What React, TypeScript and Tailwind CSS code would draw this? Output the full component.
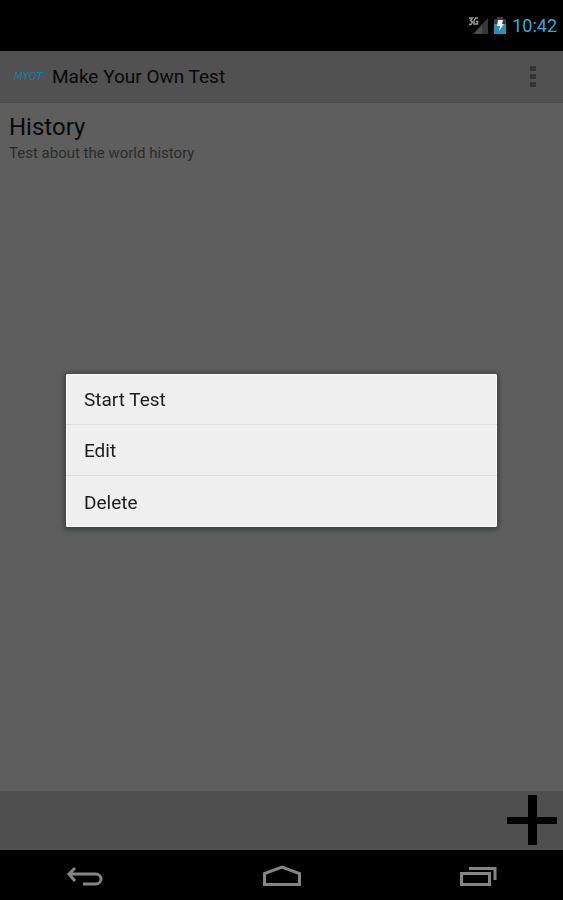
import type { ReactNode } from "react";

const menuItems = ["Start Test", "Edit", "Delete"];

const tests = [
  { id: 1, title: "History", description: "Test about the world history" },
];

function SignalIcon() {
  return (
    <svg width="20" height="18" viewBox="0 0 20 18" aria-hidden="true">
      <path d="M20 1v16H5z" fill="#373737" />
      <path d="M14 8v9H6z" fill="#4c4c4c" />
      <g fill="none" stroke="#9a9a9a" strokeWidth="1.5">
        <path d="M1 1h3.500L2.500 3.500 4.500 5 3 7.500H1" />
        <path d="M10 1H7.500L6 4v3h3.500V4.500H8" />
      </g>
    </svg>
  );
}

function BatteryIcon() {
  return (
    <svg width="12" height="18" viewBox="0 0 12 18" aria-hidden="true">
      <path d="M3 0h6v2h3v5H0V2h3z" fill="#3c3c3c" />
      <path d="M0 7h12v10H0z" fill="#2f8fb5" />
      <path d="M4 3h5L8 7h2l-5 7 1-5H3z" fill="#e6f1f5" />
    </svg>
  );
}

function NavButton({ label, children }: { label: string; children: ReactNode }) {
  return (
    <button type="button" aria-label={label}>
      <svg
        width="38"
        height="24"
        viewBox="0 0 38 24"
        fill="none"
        stroke="#858585"
        strokeWidth="3"
        aria-hidden="true"
      >
        {children}
      </svg>
    </button>
  );
}

function StatusBar() {
  return (
    <div className="flex h-[51px] items-center justify-end bg-black pr-1.5">
      <SignalIcon />
      <span className="ml-1.5">
        <BatteryIcon />
      </span>
      <time className="ml-1.5 text-lg text-[#33aade]">10:42</time>
    </div>
  );
}

function ActionBar() {
  return (
    <header className="flex h-[52px] items-center border-b border-[#4c4c4c] bg-[#515151] pr-6 pl-3.5">
      <span className="w-[38px] font-['DejaVu_Sans',sans-serif] text-[10px] text-[#0f81a8] italic">
        MYOT
      </span>
      <h1 className="flex-1 pt-0.5 text-[19px] text-[#080808]">
        Make Your Own Test
      </h1>
      <button type="button" aria-label="More options">
        <svg width="12" height="24" viewBox="0 0 12 24" fill="#343434" aria-hidden="true">
          <path d="M3 1h6v5H3zM3 9h6v5H3zM3 17h6v5H3z" />
        </svg>
      </button>
    </header>
  );
}

function ContextMenu() {
  return (
    <div className="fixed inset-0 flex items-center justify-center px-[66px]">
      <div
        role="menu"
        className="w-full divide-y divide-[#dcdedd] rounded-xs bg-[#efefef] shadow-[inset_0_0_0_1px_#fafafa,0_1px_5px_2px_#3a423c]"
      >
        {menuItems.map((item) => (
          <button
            key={item}
            type="button"
            role="menuitem"
            className="block h-[51px] w-full px-[18px] pt-1 text-left text-[19px] text-[#1c1c1c]"
          >
            {item}
          </button>
        ))}
      </div>
    </div>
  );
}

export default function App() {
  return (
    <div className="flex min-h-screen flex-col bg-[#5e5e5e] font-['Roboto',sans-serif]">
      <StatusBar />
      <ActionBar />

      <main className="flex-1">
        <ul>
          {tests.map((test) => (
            <li key={test.id} className="px-[9px] py-2">
              <h2 className="text-2xl text-[#080808]">{test.title}</h2>
              <p className="text-[15px] leading-5 text-[#2b2b2b]">
                {test.description}
              </p>
            </li>
          ))}
        </ul>
      </main>

      <div className="flex h-[59px] items-center justify-end bg-[#4f4f4f] pr-1 pb-0.5">
        <button type="button" aria-label="Add test">
          <svg width="54" height="54" viewBox="0 0 54 54" aria-hidden="true">
            <path d="M23 2h9v50h-9zM2 24h50v7H2z" fill="#000" />
          </svg>
        </button>
      </div>

      <nav className="flex h-[50px] items-center justify-between bg-black px-[66px] pt-0.5">
        <NavButton label="Back">
          <path d="M9 4 3 10l6 7M3 10h27a5 5 0 0 1 0 10H17" />
        </NavButton>
        <NavButton label="Home">
          <path d="M1.500 20.500V9.500L19 3l17.500 6.500v11z" />
        </NavButton>
        <NavButton label="Recent apps">
          <path d="M2.500 9.500h28v11h-28zM10 4.500h26V16" />
        </NavButton>
      </nav>

      <ContextMenu />
    </div>
  );
}
